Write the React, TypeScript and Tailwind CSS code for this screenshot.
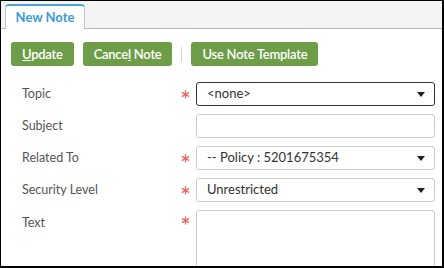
import type { ReactNode } from "react";

function Btn({ children }: { children: ReactNode }) {
  return (
    <button className="h-6 rounded-[3px] bg-[#6d9d47] px-[11px] text-[13px] font-semibold leading-none tracking-[-0.25px] text-white">
      {children}
    </button>
  );
}

function Caret() {
  return (
    <svg width="8" height="5" viewBox="0 0 8 5" className="shrink-0">
      <path d="M0 0h8L4 5z" fill="#222" />
    </svg>
  );
}

function Star() {
  return (
    <svg width="9" height="9" viewBox="0 0 10 10">
      <g stroke="#e56b5d" strokeWidth="1.5" strokeLinecap="round">
        <path d="M5 1v8" />
        <path d="M1.5 3l7 4" />
        <path d="M1.5 7l7-4" />
      </g>
    </svg>
  );
}

function Row({ label, required, children, top }: { label: string; required?: boolean; children: ReactNode; top?: boolean }) {
  return (
    <div className={`flex ${top ? "items-start" : "items-center"}`}>
      <div className={`w-[159px] text-[12.5px] text-[#555] ${top ? "pt-[4px]" : ""}`}>{label}</div>
      <div className={`flex w-[15px] ${top ? "pt-[6px]" : ""}`}>{required ? <Star /> : null}</div>
      {children}
    </div>
  );
}

function Select({ value, focused }: { value: string; focused?: boolean }) {
  return (
    <div
      className={`flex h-6 w-[239px] items-center justify-between rounded-[3px] border pl-[10px] pr-[9px] text-[13px] text-[#333] ${
        focused ? "border-[#333]" : "border-[#c9ccd2]"
      }`}
    >
      <span>{value}</span>
      <Caret />
    </div>
  );
}

export default function App() {
  return (
    <div
      className="h-[268px] w-[444px] overflow-hidden border-b-2 border-l border-r-2 border-t border-black bg-white"
      style={{ fontFamily: "Lato, 'Noto Sans', sans-serif" }}
    >
      <div className="flex h-[28px] items-end border-b border-[#b9b9b9] bg-[#f4f4f4] pl-1">
        <div className="-mb-px flex h-[25px] w-[80px] items-center justify-center rounded-t-[4px] border-x border-t-2 border-[#c3c3c3] border-t-[#47a3dc] bg-white text-[13px] font-bold text-[#3a9bd8]">
          New Note
        </div>
      </div>

      <div className="flex items-center gap-[9px] pl-[10px] pt-[13px]">
        <Btn>
          <u>U</u>pdate
        </Btn>
        <Btn>
          Cance<u>l</u> Note
        </Btn>
        <div className="h-[15px] w-px bg-[#d6d6d6]" />
        <Btn>Use Note Template</Btn>
      </div>

      <div className="flex flex-col gap-[8px] pl-[21px] pt-[16px]">
        <Row label="Topic" required>
          <Select value="<none>" focused />
        </Row>
        <Row label="Subject">
          <div className="h-6 w-[239px] rounded-[3px] border border-[#c9ccd2]" />
        </Row>
        <Row label="Related To" required>
          <Select value="-- Policy : 5201675354" />
        </Row>
        <Row label="Security Level" required>
          <Select value="Unrestricted" />
        </Row>
        <Row label="Text" required top>
          <div className="h-[80px] w-[239px] rounded-[3px] border border-[#c9ccd2]" />
        </Row>
      </div>
    </div>
  );
}
